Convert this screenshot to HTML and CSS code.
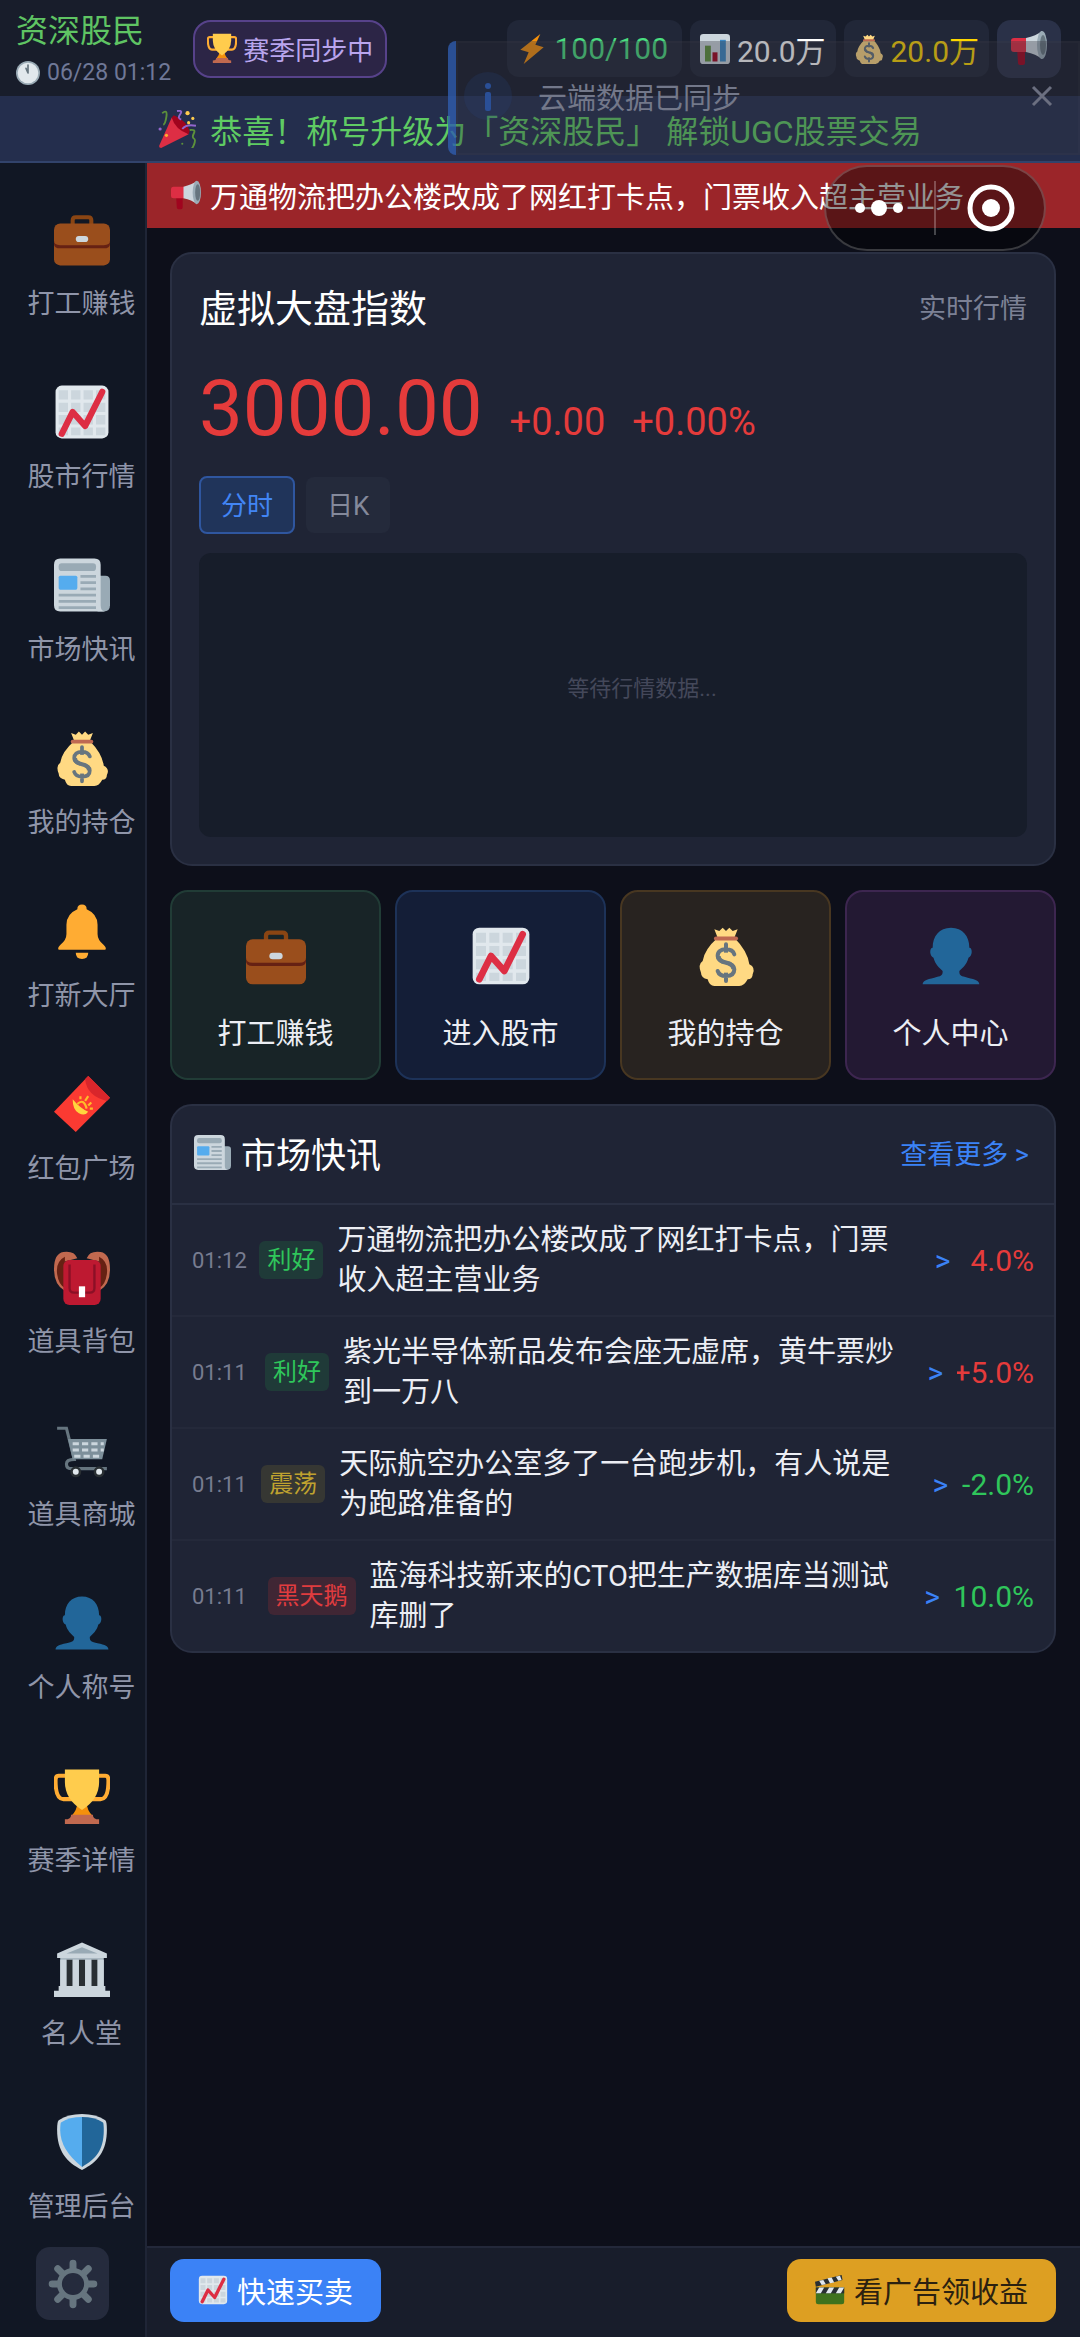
FILE: index.html
```html
<!DOCTYPE html>
<html lang="zh-CN">
<head>
    <meta charset="UTF-8">
    <meta name="viewport" content="width=device-width, initial-scale=1.0">
    <title>虚拟股市</title>
    <link rel="stylesheet" href="styles.css">
</head>
<body>
    <!-- Icon set -->
    <svg class="icon-defs" aria-hidden="true">
        <symbol id="i-briefcase" viewBox="0 0 36 36">
            <path d="M12 9V6q0-2 2-2h8q2 0 2 2v3" fill="none" stroke="#8a4513" stroke-width="2.6"/>
            <rect y="8" width="36" height="27" rx="4" fill="#9a4e1c"/>
            <path d="M0 19v2q0 3 4 3h28q4 0 4-3v-2q0 3-4 3H4q-4 0-4-3z" fill="#662113"/>
            <rect x="14" y="16" width="8" height="4" rx="2" fill="#ccd6dd"/>
        </symbol>
        <symbol id="i-chart" viewBox="0 0 36 36">
            <rect x="1" y="1" width="34" height="34" rx="4" fill="#e1e8ed"/>
            <path d="M3 4h6v6H3zm8 0h6v6h-6zm8 0h6v6h-6zm8 0h6v6h-6zM3 12h6v6H3zm8 0h6v6h-6zm8 0h6v6h-6zm8 0h6v6h-6zM3 20h6v6H3zm8 0h6v6h-6zm8 0h6v6h-6zm8 0h6v6h-6zM3 28h6v5H3zm8 0h6v5h-6zm8 0h6v5h-6zm8 0h6v5h-6z" fill="#ccd6dd"/>
            <path d="M5 32l7-14 8 9L31 5" fill="none" stroke="#dd2e44" stroke-width="4" stroke-linecap="round" stroke-linejoin="round"/>
        </symbol>
        <symbol id="i-news" viewBox="0 0 36 36">
            <path d="M28 12h5q3 0 3 3v16q0 4-4 4h-4z" fill="#99aab5"/>
            <path d="M4 1h22q4 0 4 4v26q0 4 3 4H4q-4 0-4-4V5q0-4 4-4z" fill="#ccd6dd"/>
            <rect x="3" y="4" width="24" height="5" rx="2" fill="#99aab5"/>
            <rect x="3" y="12" width="12" height="9" rx="1" fill="#55acee"/>
            <path d="M17 12.500h10M17 16.500h10M17 20.500h10M3 24.500h24M3 28.500h24M3 32.500h24" stroke="#99aab5" stroke-width="1.800"/>
        </symbol>
        <symbol id="i-bag" viewBox="0 0 36 36">
            <path d="M13 7l-2-5 3 1 2-2 2 2 2-2 2 2 3-1-2 5q8 8 9 16 4 2 2 6 0 3-3 3-2 4-5 4H11q-3 0-4-4-4-1-4-4-2-5 1-7 1-7 9-14z" fill="#ffd983"/>
            <path d="M12 7.500h12" stroke="#bf6952" stroke-width="2.500" stroke-linecap="round"/>
            <path d="M23 17q-1-3-5-3-5 0-5 4 0 3 5 4t5 4q0 4-5 4-4 0-5-3M18 11v22" fill="none" stroke="#67757f" stroke-width="2.400" stroke-linecap="round"/>
            <path d="M18 16v12" stroke="#ffd983" stroke-width="2.600"/>
            <path d="M13.500 18q0 3 4.500 4t4.500 4" fill="none" stroke="#67757f" stroke-width="2.600"/>
        </symbol>
        <symbol id="i-bell" viewBox="0 0 36 36">
            <path d="M15 4q0-3 3-3t3 3q7 3 7 10v6q0 4 4 7 2 2 1 3H3q-1-1 1-3 4-3 4-7v-6q0-7 7-10z" fill="#ffac33"/>
            <path d="M14 32h8q0 4-4 4t-4-4z" fill="#ffac33"/>
        </symbol>
        <symbol id="i-envelope" viewBox="0 0 36 36">
            <path d="M22 0l14 14-22 22L0 23z" fill="#fb3a32"/>
            <path d="M22 0l14 14-2 2q-13-3-14-14z" fill="#d9262b"/>
            <path d="M12 15q5 6 10 8-2 3-6 1t-4-9z" fill="#ffd53e"/>
            <path d="M15 18q4-4 6 3M17 15v-2m3 3l2-3m0 6l2-2m-1 4h2" fill="none" stroke="#ffbb29" stroke-width="1.400"/>
        </symbol>
        <symbol id="i-backpack" viewBox="0 0 36 36">
            <path d="M15 6q-2-5-9-4-6 1-6 11 0 10 7 14V8zM21 6q2-5 9-4 6 1 6 11 0 10-7 14V8z" fill="#c1694f"/>
            <path d="M7 5q-6 3-5 11 1 7 5 9zM29 5q6 3 5 11-1 7-5 9z" fill="#662113"/>
            <rect x="6" y="7" width="24" height="29" rx="4" fill="#be1931"/>
            <path d="M10 10v15q0 3 3 3h10q3 0 3-3V10" fill="none" stroke="#8b1026" stroke-width="1.500"/>
            <rect x="16" y="24" width="4" height="7" fill="#fff"/>
        </symbol>
        <symbol id="i-cart" viewBox="0 0 36 36">
            <path d="M2 4h6l5 20q-5 0-5 3t3 3h23" fill="none" stroke="#66757f" stroke-width="2"/>
            <path d="M9 11h25l-3 13H12z" fill="#7d8f9a"/>
            <path d="M12 14h20M12 18h20M13 22h18" stroke="#ccd6dd" stroke-width="2" stroke-dasharray="4 2"/>
            <circle cx="14" cy="32" r="3.500" fill="#292f33"/><circle cx="29" cy="32" r="3.500" fill="#292f33"/>
            <circle cx="14" cy="32" r="1.900" fill="#e1e8ed"/><circle cx="29" cy="32" r="1.900" fill="#e1e8ed"/>
        </symbol>
        <symbol id="i-person" viewBox="0 0 36 36">
            <path d="M18 1c7 0 11 5 11 12 2 0 2 5-.5 6-1 4-3.500 6-5.500 8 0 3 1 3 5 4 5 1 7 2 7 4H1c0-2 2-3 7-4 4-1 5-1 5-4-2-2-4.500-4-5.500-8-2.500-1-2.500-6-.5-6C7 6 11 1 18 1z" fill="#226699"/>
        </symbol>
        <symbol id="i-trophy" viewBox="0 0 36 36">
            <path d="M9 5H3q-2 0-2 3 0 12 5 12h8M27 5h6q2 0 2 3 0 12-5 12h-8" fill="none" stroke="#ffac33" stroke-width="2.600"/>
            <path d="M15 22h6q0 5 4 9H11q4-4 4-9z" fill="#f4900c"/>
            <path d="M7 1h22v8q0 11-11 18Q7 20 7 9z" fill="#ffcc4d"/>
            <path d="M11 30h14q0 3 4 3v3H7v-3q4 0 4-3z" fill="#c1694f"/>
        </symbol>
        <symbol id="i-hall" viewBox="0 0 36 36">
            <rect x="4" y="9" width="28" height="22" fill="#aab8c2"/>
            <path d="M8 12h4v17H8zm8 0h4v17h-4zm8 0h4v17h-4z" fill="#292f33"/>
            <path d="M4 12h4v17H4zm8 0h4v17h-4zm8 0h4v17h-4zm8 0h4v17h-4z" fill="#ccd6dd"/>
            <path d="M2 8L18 1l16 7v3H2zM3 29h30v3h3v4H0v-4h3z" fill="#ccd6dd"/>
            <path d="M8 8l10-4 10 4z" fill="#99aab5"/>
        </symbol>
        <symbol id="i-shield" viewBox="0 0 36 36">
            <path d="M18 0q9 0 15 4 1 1 1 6c0 14-6 21-16 26C8 31 2 24 2 10q0-5 1-6 6-4 15-4z" fill="#ccd6dd"/>
            <path d="M18 2q8 0 13.500 3.500.5 1 .5 5C32 23 27 29 18 34z" fill="#226699"/>
            <path d="M18 2Q10 2 4.500 5.500 4 6.500 4 10.500 4 23 18 34z" fill="#55acee"/>
        </symbol>
        <symbol id="i-gear" viewBox="0 0 36 36">
            <path d="M18 3v30M3 18h30M7 7l22 22M29 7L7 29" stroke="#66757f" stroke-width="5" stroke-linecap="round"/>
            <circle cx="18" cy="18" r="11.500" fill="#66757f"/>
            <circle cx="18" cy="18" r="8" fill="#252b3d"/>
        </symbol>
        <symbol id="i-clock" viewBox="0 0 36 36">
            <circle cx="18" cy="18" r="18" fill="#99aab5"/>
            <circle cx="18" cy="18" r="15.500" fill="#e1e8ed"/>
            <path d="M18 18V6M18 18l-3-7" stroke="#66757f" stroke-width="2.500" stroke-linecap="round"/>
        </symbol>
        <symbol id="i-bolt" viewBox="0 0 36 36">
            <path d="M28 0L4 19l10 3-6 14 24-20-10-3z" fill="#f4900c"/>
        </symbol>
        <symbol id="i-bars" viewBox="0 0 36 36">
            <rect width="36" height="36" rx="4" fill="#ccd6dd"/>
            <path d="M6 14h7v19H6z" fill="#5c913b"/><path d="M15 22h6v11h-6z" fill="#a0041e"/><path d="M24 7h7v26h-7z" fill="#3b88c3"/>
        </symbol>
        <symbol id="i-horn" viewBox="0 0 36 36">
            <path d="M6 18h8v15q0 2-2 2H9q-2 0-2-2z" fill="#a0041e"/>
            <rect y="8" width="18" height="14" rx="3" fill="#dd2e44"/>
            <path d="M15 8Q25 6 31 1v28q-6-5-16-7z" fill="#ccd6dd"/>
            <ellipse cx="31" cy="15" rx="5" ry="14" fill="#9aabb6"/>
            <ellipse cx="32" cy="15" rx="3" ry="10" fill="#66757f"/>
        </symbol>
        <symbol id="i-party" viewBox="0 0 36 36">
            <path d="M13 7L1 34q0 2 2 2l26-13z" fill="#dd2e44"/>
            <path d="M13 7q3 11 16 16l1-3Q27 10 15 5z" fill="#a0041e"/>
            <path d="M4 3q5-4 4 3t-3 8M30 19q6-1 4 3t0 5 0 6-3 3" fill="none" stroke="#5c913b" stroke-width="1.800"/>
            <path d="M18 1q6-1 3 3t1 5M23 18q4-5 13-3" fill="none" stroke="#9266cc" stroke-width="1.800"/>
            <circle cx="28" cy="3" r="2" fill="#ffcc4d"/><circle cx="33" cy="8" r="1.500" fill="#ffcc4d"/><circle cx="29" cy="12" r="1.500" fill="#ffcc4d"/>
            <circle cx="2" cy="18" r="1.500" fill="#9266cc"/><circle cx="8" cy="24" r="1.500" fill="#ffac33"/><circle cx="23" cy="32" r="1" fill="#5c913b"/>
        </symbol>
        <symbol id="i-clapper" viewBox="0 0 36 36">
            <path d="M1 15h34v17q0 3-3 3H4q-3 0-3-3z" fill="#3e721d"/>
            <path d="M0 8L32 0l1 6L1 14z" fill="#292f33"/><path d="M5 7l5-1 3 5-5 1zm10-3l5-1 3 6-5 1zm10-2l5-1 2 5-4 1z" fill="#e1e8ed"/>
            <path d="M1 15h34v7H1z" fill="#292f33"/><path d="M5 15h6l-4 7H1zm12 0h6l-4 7h-6zm12 0h6l-4 7h-6z" fill="#e1e8ed"/>
        </symbol>
    </svg>

    <!-- Top bar -->
    <header class="topbar">
        <div class="user">
            <div class="user-title">资深股民</div>
            <div class="user-time"><svg class="icon"><use href="#i-clock"/></svg>06/28 01:12</div>
        </div>
        <button type="button" class="season"><svg class="icon"><use href="#i-trophy"/></svg>赛季同步中</button>
        <div class="stats">
            <div class="stat energy"><svg class="icon"><use href="#i-bolt"/></svg>100/100</div>
            <div class="stat"><svg class="icon"><use href="#i-bars"/></svg>20.0万</div>
            <div class="stat gold"><svg class="icon"><use href="#i-bag"/></svg>20.0万</div>
            <button type="button" class="notice-btn" aria-label="公告"><svg class="icon"><use href="#i-horn"/></svg></button>
        </div>
    </header>

    <div class="congrats"><svg class="icon"><use href="#i-party"/></svg>恭喜！称号升级为「资深股民」 解锁UGC股票交易</div>

    <div class="layout">
        <!-- Sidebar -->
        <aside class="sidebar">
            <nav class="menu">
                <a href="#work"><svg class="icon"><use href="#i-briefcase"/></svg>打工赚钱</a>
                <a href="#market"><svg class="icon"><use href="#i-chart"/></svg>股市行情</a>
                <a href="#news"><svg class="icon"><use href="#i-news"/></svg>市场快讯</a>
                <a href="#holdings"><svg class="icon"><use href="#i-bag"/></svg>我的持仓</a>
                <a href="#ipo"><svg class="icon"><use href="#i-bell"/></svg>打新大厅</a>
                <a href="#redpacket"><svg class="icon"><use href="#i-envelope"/></svg>红包广场</a>
                <a href="#backpack"><svg class="icon"><use href="#i-backpack"/></svg>道具背包</a>
                <a href="#shop"><svg class="icon"><use href="#i-cart"/></svg>道具商城</a>
                <a href="#title"><svg class="icon"><use href="#i-person"/></svg>个人称号</a>
                <a href="#season"><svg class="icon"><use href="#i-trophy"/></svg>赛季详情</a>
                <a href="#fame"><svg class="icon"><use href="#i-hall"/></svg>名人堂</a>
                <a href="#admin"><svg class="icon"><use href="#i-shield"/></svg>管理后台</a>
            </nav>
            <button type="button" class="settings" aria-label="设置"><svg class="icon"><use href="#i-gear"/></svg></button>
        </aside>

        <div class="content">
            <div class="ticker"><svg class="icon"><use href="#i-horn"/></svg>万通物流把办公楼改成了网红打卡点，门票收入超主营业务</div>

            <main class="main">
                <!-- Index card -->
                <section class="card index-card">
                    <div class="index-head">
                        <h2>虚拟大盘指数</h2>
                        <span>实时行情</span>
                    </div>
                    <div class="index-value">
                        <strong>3000.00</strong>
                        <span>+0.00</span>
                        <span>+0.00%</span>
                    </div>
                    <div class="tabs">
                        <button type="button" class="tab active">分时</button>
                        <button type="button" class="tab">日K</button>
                    </div>
                    <div class="chart">等待行情数据...</div>
                </section>

                <!-- Quick actions -->
                <div class="actions">
                    <button type="button" class="action green"><svg class="icon"><use href="#i-briefcase"/></svg>打工赚钱</button>
                    <button type="button" class="action blue"><svg class="icon"><use href="#i-chart"/></svg>进入股市</button>
                    <button type="button" class="action amber"><svg class="icon"><use href="#i-bag"/></svg>我的持仓</button>
                    <button type="button" class="action purple"><svg class="icon"><use href="#i-person"/></svg>个人中心</button>
                </div>

                <!-- News list -->
                <section class="card news">
                    <div class="news-head">
                        <h2><svg class="icon"><use href="#i-news"/></svg>市场快讯</h2>
                        <a href="#news">查看更多 &gt;</a>
                    </div>
                    <div class="news-row">
                        <span class="time">01:12</span>
                        <span class="tag good">利好</span>
                        <p>万通物流把办公楼改成了网红打卡点，门票收入超主营业务</p>
                        <span class="arrow">&gt;</span>
                        <span class="change up">4.0%</span>
                    </div>
                    <div class="news-row">
                        <span class="time">01:11</span>
                        <span class="tag good">利好</span>
                        <p>紫光半导体新品发布会座无虚席，黄牛票炒到一万八</p>
                        <span class="arrow">&gt;</span>
                        <span class="change up">+5.0%</span>
                    </div>
                    <div class="news-row">
                        <span class="time">01:11</span>
                        <span class="tag mixed">震荡</span>
                        <p>天际航空办公室多了一台跑步机，有人说是为跑路准备的</p>
                        <span class="arrow">&gt;</span>
                        <span class="change down">-2.0%</span>
                    </div>
                    <div class="news-row">
                        <span class="time">01:11</span>
                        <span class="tag bad">黑天鹅</span>
                        <p>蓝海科技新来的CTO把生产数据库当测试库删了</p>
                        <span class="arrow">&gt;</span>
                        <span class="change down">10.0%</span>
                    </div>
                </section>
            </main>

            <footer class="bottombar">
                <button type="button" class="trade"><svg class="icon"><use href="#i-chart"/></svg>快速买卖</button>
                <button type="button" class="ad"><svg class="icon"><use href="#i-clapper"/></svg>看广告领收益</button>
            </footer>
        </div>
    </div>

    <!-- Toast, fading out -->
    <div class="toast">
        <span class="toast-icon">
            <svg viewBox="0 0 48 48"><circle cx="24" cy="14" r="3"/><rect x="21" y="20" width="6" height="19" rx="2"/></svg>
        </span>
        <span class="toast-text">云端数据已同步</span>
        <button type="button" class="toast-close" aria-label="关闭">
            <svg viewBox="0 0 24 24"><path d="M3 3l18 18M21 3L3 21"/></svg>
        </button>
    </div>

    <!-- Mini program capsule -->
    <div class="capsule">
        <button type="button" aria-label="更多">
            <svg viewBox="0 0 50 50"><circle cx="6" cy="25" r="5"/><circle cx="25" cy="25" r="8"/><circle cx="44" cy="25" r="5"/></svg>
        </button>
        <i></i>
        <button type="button" aria-label="退出">
            <svg viewBox="0 0 50 50"><circle cx="25" cy="25" r="21" fill="none" stroke="#fff" stroke-width="5"/><circle cx="25" cy="25" r="9"/></svg>
        </button>
    </div>
</body>
</html>
```
FILE: styles.css
```css
/* Base Styles */
* {
    box-sizing: border-box;
}

body {
    margin: 0;
    min-height: 100vh;
    display: flex;
    flex-direction: column;
    position: relative;
    background: #0d0f1a;
    color: #fff;
    font-family: Roboto, "Noto Sans CJK SC", sans-serif;
    font-size: 29px;
}

button {
    font-family: inherit;
    border: none;
    padding: 0;
    cursor: pointer;
}

a {
    text-decoration: none;
}

h2, p {
    margin: 0;
    font-weight: 400;
}

.icon {
    width: 30px;
    height: 30px;
    flex: none;
}

.icon-defs {
    position: absolute;
    width: 0;
    height: 0;
}

/* Top bar */
.topbar {
    display: flex;
    align-items: flex-start;
    height: 96px;
    padding: 8px 19px 0 16px;
    background: #181d2b;
}

.user-title {
    font-size: 32px;
    line-height: 46px;
    color: #5fc463;
}

.user-time {
    display: flex;
    align-items: center;
    gap: 7px;
    font-size: 23px;
    line-height: 38px;
    color: #6f7897;
}

.user-time .icon {
    width: 24px;
    height: 24px;
}

.season {
    display: flex;
    align-items: center;
    gap: 6px;
    height: 58px;
    margin: 12px 0 0 22px;
    padding: 0 12px 2px;
    border: 2px solid #57428a;
    border-radius: 18px;
    background: #2c2546;
    color: #b9a5ee;
    font-size: 26px;
}

.stats {
    display: flex;
    gap: 8px;
    margin: 12px 0 0 auto;
}

.stat {
    display: flex;
    align-items: center;
    gap: 7px;
    height: 57px;
    padding: 0 10px;
    border-radius: 12px;
    background: #212738;
    font-size: 30px;
}

.stat.energy {
    padding-right: 14px;
    color: #4ade80;
}

.stat.gold {
    color: #ffd700;
}

.notice-btn {
    width: 64px;
    height: 58px;
    border-radius: 14px;
    background: #2a3148;
}

.notice-btn .icon {
    width: 38px;
    height: 36px;
}

/* Title upgrade banner */
.congrats {
    display: flex;
    align-items: center;
    justify-content: center;
    gap: 14px;
    height: 67px;
    border-bottom: 2px solid #32436b;
    background: #242e4d;
    color: #5fcb63;
    font-size: 32px;
    white-space: pre;
}

.congrats .icon {
    width: 38px;
    height: 38px;
}

.layout {
    display: flex;
    flex: 1;
}

/* Sidebar */
.sidebar {
    display: flex;
    flex-direction: column;
    align-items: center;
    width: 147px;
    flex: none;
    border-right: 2px solid #1f2536;
    background: #111724;
}

.menu {
    width: 100%;
    padding-left: 18px;
}

.menu a {
    display: flex;
    flex-direction: column;
    align-items: center;
    gap: 18px;
    height: 173px;
    padding-top: 48px;
    color: #8f95a9;
    font-size: 27px;
    line-height: 38px;
}

.menu .icon {
    width: 56px;
    height: 56px;
}

.settings {
    width: 73px;
    height: 73px;
    margin-top: 8px;
    border-radius: 14px;
    background: #252b3d;
}

.settings .icon {
    width: 50px;
    height: 50px;
    vertical-align: middle;
}

/* Content */
.content {
    flex: 1;
    min-width: 0;
    display: flex;
    flex-direction: column;
}

.ticker {
    display: flex;
    align-items: center;
    gap: 9px;
    height: 65px;
    padding: 0 0 2px 24px;
    background: #9b2529;
    white-space: nowrap;
}

.main {
    flex: 1;
    display: flex;
    flex-direction: column;
    gap: 24px;
    padding: 24px 24px 24px 23px;
}

.card {
    border: 2px solid #2a3043;
    border-radius: 22px;
    background: #1f2435;
}

/* Index card */
.index-card {
    padding: 27px;
}

.index-head {
    display: flex;
    align-items: center;
    justify-content: space-between;
    line-height: 56px;
}

.index-head h2 {
    font-size: 38px;
}

.index-head span {
    color: #7c8195;
    font-size: 27px;
}

.index-value {
    display: flex;
    align-items: baseline;
    gap: 27px;
    margin-top: 26px;
    line-height: 92px;
    color: #e53b3b;
    font-size: 38px;
}

.index-value strong {
    font-size: 78px;
    font-weight: 400;
}

.tabs {
    display: flex;
    align-items: center;
    gap: 11px;
    margin-top: 8px;
}

.tab {
    height: 56px;
    padding: 0 21px 4px;
    border-radius: 8px;
    background: #242a3b;
    color: #84899b;
    font-size: 26px;
}

.tab.active {
    height: 58px;
    padding: 0 20px 4px;
    border: 2px solid #2f569f;
    background: #20345a;
    color: #4285f4;
}

.chart {
    display: flex;
    align-items: center;
    justify-content: center;
    height: 284px;
    margin-top: 19px;
    padding: 0 0 18px 58px;
    border-radius: 12px;
    background: #171d2a;
    color: #44485a;
    font-size: 22px;
}

/* Quick actions */
.actions {
    display: grid;
    grid-template-columns: repeat(4, 1fr);
    gap: 14px;
}

.action {
    display: flex;
    flex-direction: column;
    align-items: center;
    gap: 27px;
    height: 190px;
    padding-top: 34px;
    border: 2px solid;
    border-radius: 18px;
    color: #eceef4;
    font-size: 29px;
    line-height: 42px;
}

.action .icon {
    width: 60px;
    height: 60px;
}

.action.green {
    background: #182427;
    border-color: #213c36;
}

.action.blue {
    background: #141e37;
    border-color: #1d3258;
}

.action.amber {
    background: #282320;
    border-color: #483721;
}

.action.purple {
    background: #231933;
    border-color: #3d2650;
}

/* News list */
.news {
    overflow: hidden;
}

.news-head {
    display: flex;
    align-items: center;
    justify-content: space-between;
    height: 99px;
    padding: 0 25px 4px 22px;
    border-bottom: 2px solid #2a3043;
}

.news-head h2 {
    display: flex;
    align-items: center;
    gap: 10px;
    font-size: 35px;
}

.news-head .icon {
    width: 37px;
    height: 37px;
}

.news-head a {
    color: #3b82f6;
    font-size: 27px;
}

.news-row {
    display: flex;
    align-items: center;
    gap: 14px;
    padding: 15px 20px;
    border-bottom: 2px solid #24293a;
}

.news-row:last-child {
    border-bottom: none;
}

.news-row .time {
    flex: 0 1 70px;
    min-width: 0;
    color: #777c90;
    font-size: 22px;
}

.news-row .tag {
    flex: none;
    padding: 0 8px;
    border-radius: 6px;
    font-size: 24px;
    line-height: 38px;
}

.tag.good {
    background: #1f3a38;
    color: #2fc65b;
}

.tag.mixed {
    background: #363733;
    color: #bfa22f;
}

.tag.bad {
    background: #402634;
    color: #e03c3f;
}

.news-row p {
    flex: 0 1 auto;
    min-width: 0;
    padding-right: 8px;
    line-height: 40px;
    color: #eceef4;
}

.news-row .arrow {
    flex: none;
    color: #3b82f6;
    font-size: 30px;
}

.news-row .change {
    display: flex;
    flex: 0 1 91px;
    justify-content: flex-end;
    min-width: 0;
    overflow: hidden;
    font-size: 30px;
}

.change.up {
    color: #e53b3b;
}

.change.down {
    color: #2fc65b;
}

/* Bottom bar */
.bottombar {
    display: flex;
    justify-content: space-between;
    height: 91px;
    padding: 11px 24px 0 23px;
    border-top: 2px solid #23283a;
    background: #181d2b;
}

.bottombar button {
    display: flex;
    align-items: center;
    gap: 9px;
    height: 63px;
    padding: 0 28px 2px;
    border-radius: 14px;
    font-size: 29px;
}

.bottombar .trade {
    background: #3b82f6;
    color: #fff;
}

.bottombar .ad {
    background: #dd9f22;
    color: #2b2110;
}

/* Toast */
.toast {
    position: absolute;
    top: 41px;
    right: 0;
    display: flex;
    align-items: center;
    width: 632px;
    height: 114px;
    padding: 0 26px 4px 8px;
    border-left: 8px solid rgba(47, 98, 190, 0.7);
    border-radius: 8px 0 0 8px;
    background: rgba(50, 48, 60, 0.35);
    box-shadow: inset 0 0 0 2px rgba(255, 255, 255, 0.02);
}

.toast-icon {
    width: 48px;
    height: 48px;
    border-radius: 50%;
    background: rgba(40, 70, 130, 0.2);
    fill: #2a4f96;
}

.toast-text {
    margin-left: 26px;
    color: #73788a;
}

.toast-close {
    width: 24px;
    height: 24px;
    margin-left: auto;
    background: none;
    stroke: #6b6f80;
    stroke-width: 3;
}

.toast-close svg {
    display: block;
}

/* Capsule */
.capsule {
    position: absolute;
    top: 165px;
    right: 34px;
    display: flex;
    align-items: center;
    justify-content: space-between;
    width: 222px;
    height: 86px;
    padding: 0 28px;
    border: 2px solid rgba(255, 255, 255, 0.2);
    border-radius: 43px;
    background: rgba(0, 0, 0, 0.42);
}

.capsule button {
    width: 50px;
    height: 50px;
    background: none;
    fill: #fff;
}

.capsule svg {
    display: block;
}

.capsule i {
    width: 2px;
    height: 54px;
    background: rgba(255, 255, 255, 0.25);
}
```
